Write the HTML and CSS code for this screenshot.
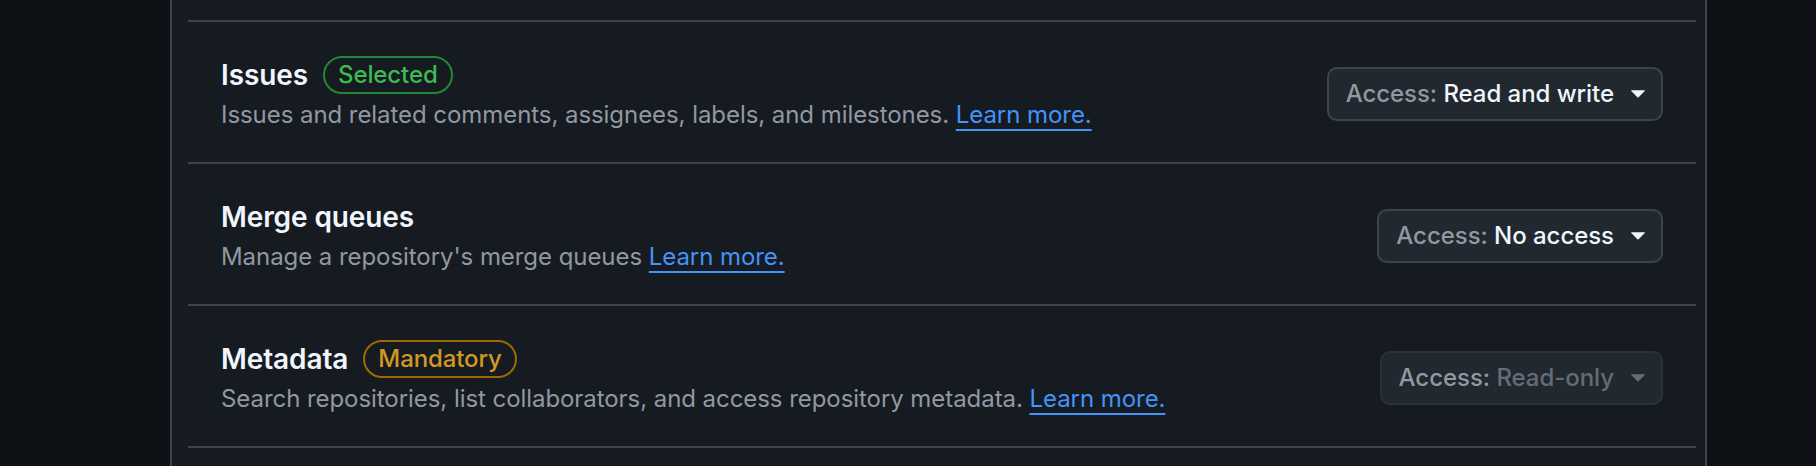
FILE: index.html
```html
<!DOCTYPE html>
<html lang="en">
<head>
    <meta charset="UTF-8">
    <meta name="viewport" content="width=device-width, initial-scale=1.0">
    <title>Repository permissions</title>
    <link rel="stylesheet" href="styles.css">
</head>
<body>
    <div class="page">
        <div class="panel">
            <div class="perm-tail"></div>

            <div class="perm-row">
                <div class="perm-info">
                    <div class="perm-title">
                        <span>Issues</span>
                        <span class="badge badge-success">Selected</span>
                    </div>
                    <div class="perm-desc">
                        Issues and related comments, assignees, labels, and milestones. <a href="#" class="link">Learn more.</a>
                    </div>
                </div>
                <button class="access-btn">
                    <span class="access-label">Access:</span>&nbsp;<span class="access-value">Read and write</span>
                    <svg class="caret" viewBox="4.3 7 7.4 4" width="14" height="8"><path d="m4.427 7.427 3.396 3.396a.25.25 0 0 0 .354 0l3.396-3.396A.25.25 0 0 0 11.396 7H4.604a.25.25 0 0 0-.177.427Z"></path></svg>
                </button>
            </div>

            <div class="perm-row">
                <div class="perm-info">
                    <div class="perm-title">
                        <span>Merge queues</span>
                    </div>
                    <div class="perm-desc">
                        Manage a repository's merge queues <a href="#" class="link">Learn more.</a>
                    </div>
                </div>
                <button class="access-btn">
                    <span class="access-label">Access:</span>&nbsp;<span class="access-value">No access</span>
                    <svg class="caret" viewBox="4.3 7 7.4 4" width="14" height="8"><path d="m4.427 7.427 3.396 3.396a.25.25 0 0 0 .354 0l3.396-3.396A.25.25 0 0 0 11.396 7H4.604a.25.25 0 0 0-.177.427Z"></path></svg>
                </button>
            </div>

            <div class="perm-row">
                <div class="perm-info">
                    <div class="perm-title">
                        <span>Metadata</span>
                        <span class="badge badge-attention">Mandatory</span>
                    </div>
                    <div class="perm-desc">
                        Search repositories, list collaborators, and access repository metadata. <a href="#" class="link">Learn more.</a>
                    </div>
                </div>
                <button class="access-btn" disabled>
                    <span class="access-label">Access:</span>&nbsp;<span class="access-value">Read-only</span>
                    <svg class="caret" viewBox="4.3 7 7.4 4" width="14" height="8"><path d="m4.427 7.427 3.396 3.396a.25.25 0 0 0 .354 0l3.396-3.396A.25.25 0 0 0 11.396 7H4.604a.25.25 0 0 0-.177.427Z"></path></svg>
                </button>
            </div>

            <div class="perm-row perm-row-cut"></div>
        </div>
    </div>
</body>
</html>
```

FILE: styles.css
```css
body {
    margin: 0;
    background: #0e1116;
    font-family: Inter, 'Noto Sans', sans-serif;
    height: 466px;
    overflow: hidden;
}
.page {
    display: flex;
    padding-left: 170px;
}
.panel {
    width: 1537px;
    box-sizing: border-box;
    height: 466px;
    background: #161b22;
    border-left: 2px solid #3d444d;
    border-right: 2px solid #3d444d;
    padding: 0 9px 0 16px;
}
.perm-tail {
    height: 20px;
}
.perm-row {
    display: flex;
    align-items: center;
    justify-content: space-between;
    border-top: 2px solid #3d444d;
    padding: 32px 33px 29px 33px;
}
.perm-row-cut {
    padding: 0;
    height: 40px;
}
.perm-title {
    display: flex;
    align-items: center;
    gap: 15px;
    height: 42px;
    font-size: 28px;
    line-height: 42px;
    font-weight: 600;
    color: #f0f6fc;
    letter-spacing: -0.1px;
}
.perm-desc {
    font-size: 24px;
    line-height: 37px;
    color: #9198a1;
    letter-spacing: -0.06px;
}
.link {
    color: #4493f8;
    text-decoration: underline;
    text-decoration-thickness: 2px;
    text-underline-offset: 6px;
}
.badge {
    display: inline-flex;
    align-items: center;
    box-sizing: border-box;
    height: 38px;
    padding: 0 13px;
    border: 2px solid;
    border-radius: 999px;
    font-size: 24px;
    font-weight: 500;
    line-height: 1;
    letter-spacing: -0.1px;
}
.badge-success {
    color: #3fb950;
    border-color: #238636;
}
.badge-attention {
    color: #d29922;
    border-color: #9e6a03;
}
.access-btn {
    display: flex;
    align-items: center;
    box-sizing: border-box;
    height: 54px;
    padding: 0 16px 0 17px;
    background: #212830;
    border: 2px solid #3d444d;
    border-radius: 10px;
    font-family: inherit;
    font-size: 24px;
    font-weight: 500;
    letter-spacing: -0.05px;
    cursor: pointer;
}
.access-label {
    color: #9198a1;
}
.access-value {
    color: #f0f6fc;
}
.caret {
    fill: #f0f6fc;
    margin-left: 17px;
}
.access-btn:disabled {
    border-color: #2a313c;
    cursor: default;
}
.access-btn:disabled .access-value {
    color: #656c76;
}
.access-btn:disabled .caret {
    fill: #656c76;
}
```
